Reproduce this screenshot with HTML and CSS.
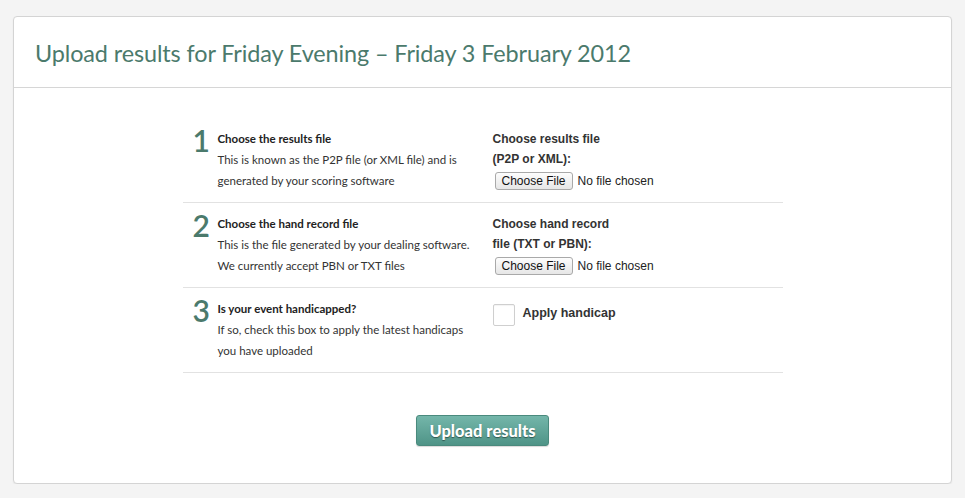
FILE: index.html
```html
<!DOCTYPE html>
<html>
<head>
<meta charset="utf-8">
<link rel="stylesheet" href="styles.css">
</head>
<body>
<div class="card">
  <div class="card-header">
    <h1 class="title">Upload results for Friday Evening – Friday 3 February 2012</h1>
  </div>
  <div class="card-body">
    <div class="steps">
      <div class="step">
        <div class="num">1</div>
        <div class="desc">
          <div class="desc-title">Choose the results file</div>
          <div>This is known as the P2P file (or XML file) and is generated by your scoring software</div>
        </div>
        <div class="field">
          <div class="label">Choose results file<br>(P2P or XML):</div>
          <div class="file"><span class="file-btn">Choose File</span><span class="file-name">No file chosen</span></div>
        </div>
      </div>
      <div class="step">
        <div class="num">2</div>
        <div class="desc">
          <div class="desc-title">Choose the hand record file</div>
          <div>This is the file generated by your dealing software. We currently accept PBN or TXT files</div>
        </div>
        <div class="field">
          <div class="label">Choose hand record<br>file (TXT or PBN):</div>
          <div class="file"><span class="file-btn">Choose File</span><span class="file-name">No file chosen</span></div>
        </div>
      </div>
      <div class="step">
        <div class="num">3</div>
        <div class="desc">
          <div class="desc-title">Is your event handicapped?</div>
          <div>If so, check this box to apply the latest handicaps you have uploaded</div>
        </div>
        <div class="field check-field">
          <span class="checkbox"></span>
          <span class="check-label">Apply handicap</span>
        </div>
      </div>
    </div>
    <div class="actions">
      <button class="upload-btn">Upload results</button>
    </div>
  </div>
</div>
</body>
</html>
```
FILE: styles.css
```css
html, body {
  margin: 0;
  padding: 0;
  background: #f4f4f4;
}
body {
  padding: 16px 13px 0 13px;
  font-family: "Lato", "Open Sans", sans-serif;
}
.card {
  width: 937px;
  height: 466px;
  background: #fff;
  border: 1px solid #d4d4d4;
  border-radius: 4px;
  box-shadow: 0 1px 2px rgba(0,0,0,0.06);
}
.card-header {
  height: 70px;
  border-bottom: 1px solid #d6d6d6;
  display: flex;
  align-items: center;
  padding-left: 21px;
}
.title {
  margin: 0;
  font-weight: 400;
  font-size: 23.4px;
  color: #4b7a6c;
  letter-spacing: -0.1px;
  padding-top: 1px;
}
.card-body {
  padding-top: 30px;
}
.steps {
  width: 600px;
  margin: 0 auto;
}
.step {
  display: flex;
  height: 63px;
  padding: 10px 0 11px;
  border-bottom: 1px solid #e2e2e2;
  line-height: 21px;
  font-size: 11.5px;
  color: #333;
}
.num {
  width: 25px;
  padding-left: 10px;
  font-size: 30px;
  font-weight: 600;
  line-height: 22px;
  color: #4b7a6c;
  padding-top: 1px;
}
.desc {
  width: 258px;
  padding-right: 17px;
}
.desc-title {
  font-weight: 700;
  color: #222;
}
.field {
  flex: 1;
  font-family: "Liberation Sans", Arial, sans-serif;
  font-size: 12px;
  line-height: 20px;
  color: #333;
}
.label {
  font-weight: 700;
  padding-top: 1px;
}
.file {
  display: flex;
  align-items: center;
  margin-top: 2px;
  height: 20px;
}
.file-btn {
  display: inline-block;
  box-sizing: border-box;
  height: 18px;
  line-height: 16px;
  padding: 0 6px;
  margin-left: 2px;
  border: 1px solid #a9a9a9;
  border-radius: 3px;
  background: linear-gradient(#fdfdfd, #e6e6e6);
  font-size: 12px;
  color: #111;
}
.file-name {
  margin-left: 5px;
  color: #222;
}
.check-field {
  display: flex;
  align-items: flex-start;
  padding-top: 6px;
}
.checkbox {
  width: 20px;
  height: 20px;
  border: 1px solid #cfcfcf;
  border-radius: 2px;
  background: #fff;
  box-shadow: inset 0 1px 1px rgba(0,0,0,0.05);
}
.check-label {
  margin-left: 8px;
  font-weight: 700;
  font-size: 12.5px;
  line-height: 18px;
  color: #333;
}
.actions {
  display: flex;
  justify-content: center;
  padding-top: 42px;
}
.upload-btn {
  width: 133px;
  height: 31px;
  border: 1px solid #4a8a7d;
  border-radius: 3px;
  background: linear-gradient(#74b6aa, #4f9487);
  color: #fff;
  font-family: "Lato", "Open Sans", sans-serif;
  font-weight: 900;
  font-size: 16.5px;
  text-shadow: 0 1px 1px rgba(0,0,0,0.45);
  box-shadow: 0 1px 1px rgba(0,0,0,0.15);
  padding: 0;
}
```
